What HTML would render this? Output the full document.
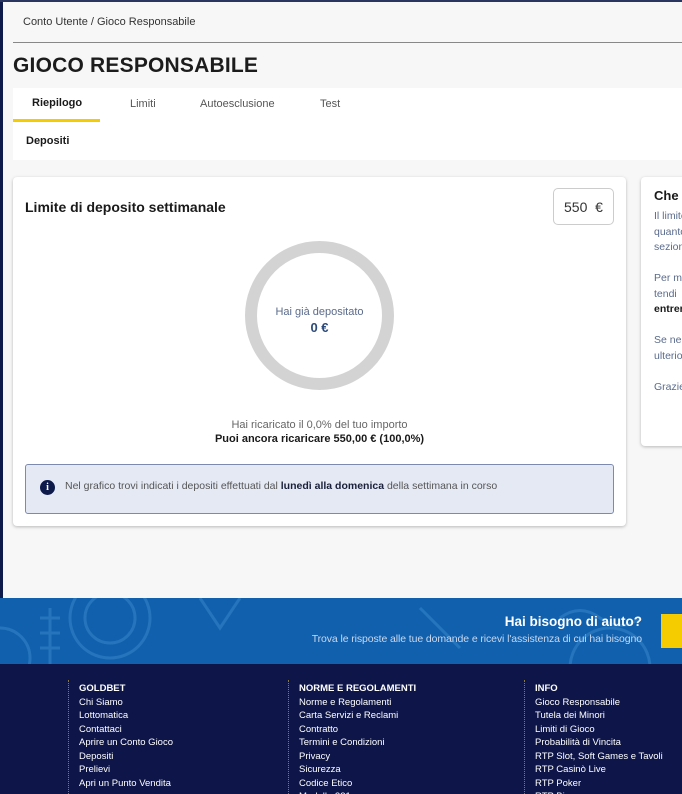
<!DOCTYPE html>
<html><head><meta charset="utf-8"><style>
*{margin:0;padding:0;box-sizing:border-box}
html,body{width:682px;height:794px;overflow:hidden}
body{background:#f7f7f7;font-family:"Liberation Sans",sans-serif;position:relative;color:#1a1a1a}
.a{position:absolute}
</style></head><body>
<div class="a" style="left:0;top:0;width:3px;height:600px;background:#0e1a4a"></div>
<div class="a" style="left:0;top:0;width:682px;height:2px;background:#2a3560"></div>
<div class="a" style="left:23px;top:16px;font-size:11px;color:#333">Conto Utente / Gioco Responsabile</div>
<div class="a" style="left:13px;top:42px;width:669px;height:1px;background:#888"></div>
<div class="a" style="left:13px;top:54px;font-size:21px;font-weight:bold;color:#1c1c1c;letter-spacing:0.2px">GIOCO RESPONSABILE</div>
<div class="a" style="left:13px;top:88px;width:669px;height:72px;background:#fff"></div>
<div class="a" style="left:32px;top:97px;font-size:11px;font-weight:bold">Riepilogo</div>
<div class="a" style="left:130px;top:98px;font-size:11px;color:#555">Limiti</div>
<div class="a" style="left:200px;top:98px;font-size:11px;color:#555">Autoesclusione</div>
<div class="a" style="left:320px;top:98px;font-size:11px;color:#555">Test</div>
<div class="a" style="left:13px;top:119px;width:87px;height:3px;background:#f5cc00"></div>
<div class="a" style="left:26px;top:135px;font-size:11px;font-weight:bold">Depositi</div>

<div class="a" style="left:13px;top:177px;width:613px;height:349px;background:#fff;border-radius:4px;box-shadow:0 1px 3px rgba(0,0,0,.25)"></div>
<div class="a" style="left:25px;top:199px;font-size:14px;font-weight:bold">Limite di deposito settimanale</div>
<div class="a" style="left:553px;top:188px;width:61px;height:37px;border:1px solid #ccc;border-radius:5px;font-size:14px;color:#333;padding:10px 0 0 10px">550&nbsp; €</div>
<div class="a" style="left:245px;top:241px;width:149px;height:149px;border:12px solid #d3d3d3;border-radius:50%"></div>
<div class="a" style="left:245px;top:306px;width:149px;text-align:center;font-size:11px;color:#5a6b8c">Hai già depositato</div>
<div class="a" style="left:245px;top:320px;width:149px;text-align:center;font-size:13px;font-weight:bold;color:#2c4a7a">0 €</div>
<div class="a" style="left:13px;top:419px;width:613px;text-align:center;font-size:11px;color:#666">Hai ricaricato il 0,0% del tuo importo</div>
<div class="a" style="left:13px;top:433px;width:613px;text-align:center;font-size:11px;font-weight:bold">Puoi ancora ricaricare 550,00 € (100,0%)</div>
<div class="a" style="left:25px;top:464px;width:589px;height:50px;background:#e4e9f4;border:1px solid #7d8ab0;border-radius:3px"></div>
<div class="a" style="left:40px;top:480px;width:15px;height:15px;border-radius:50%;background:#0e1a4a;color:#fff;font-size:10px;font-weight:bold;text-align:center;line-height:15px;font-family:'Liberation Serif',serif">i</div>
<div class="a" style="left:65px;top:480px;font-size:10.5px;color:#555">Nel grafico trovi indicati i depositi effettuati dal <b style="color:#1a1f3a">lunedì alla domenica</b> della settimana in corso</div>

<div class="a" style="left:641px;top:177px;width:50px;height:269px;background:#fff;border-radius:4px;box-shadow:0 1px 3px rgba(0,0,0,.25)"></div>
<div class="a" style="left:654px;top:188px;font-size:13px;font-weight:bold;white-space:nowrap">Che cosa</div>
<div class="a" style="left:654px;top:209px;font-size:10.5px;line-height:15.5px;color:#5a6b8c;white-space:nowrap">Il limite<br>quanto<br>sezione<br><br>Per mo<br>tendi<br><b style="color:#1a1a1a">entrerà</b><br><br>Se nece<br>ulteriori<br><br>Grazie</div>

<div class="a" style="left:0;top:598px;width:682px;height:66px;background:#1060ad"></div>
<svg class="a" style="left:0;top:598px" width="682" height="66"><g fill="none" stroke="#2b7ac0" stroke-width="3" opacity=".8"><circle cx="110" cy="20" r="40"/><circle cx="110" cy="20" r="25"/><circle cx="0" cy="60" r="30"/><path d="M200 0l20 30 20-30M420 10l40 40M560 20q20-15 40 0 20 15 40 0"/><circle cx="610" cy="70" r="40"/><path d="M50 10v56M40 20h20M40 35h20M40 50h20"/></g></svg>
<div class="a" style="left:661px;top:614px;width:21px;height:34px;background:#f5cc00"></div>
<div class="a" style="right:40px;top:614px;font-size:13.5px;font-weight:bold;color:#fff">Hai bisogno di aiuto?</div>
<div class="a" style="right:40px;top:633px;font-size:10.5px;color:#c9d8ee;letter-spacing:-0.1px">Trova le risposte alle tue domande e ricevi l'assistenza di cui hai bisogno</div>

<div class="a" style="left:0;top:664px;width:682px;height:130px;background:#0e1649"></div>
<div class="a" style="left:68px;top:680px;height:114px;border-left:1px dotted #8a7a40"></div>
<div class="a" style="left:288px;top:680px;height:114px;border-left:1px dotted #8a7a40"></div>
<div class="a" style="left:524px;top:680px;height:114px;border-left:1px dotted #8a7a40"></div>
<div class="a" style="left:79px;top:682px;font-size:9.5px;line-height:13.5px;color:#fff"><b>GOLDBET</b><br>Chi Siamo<br>Lottomatica<br>Contattaci<br>Aprire un Conto Gioco<br>Depositi<br>Prelievi<br>Apri un Punto Vendita</div>
<div class="a" style="left:299px;top:682px;font-size:9.5px;line-height:13.5px;color:#fff"><b>NORME E REGOLAMENTI</b><br>Norme e Regolamenti<br>Carta Servizi e Reclami<br>Contratto<br>Termini e Condizioni<br>Privacy<br>Sicurezza<br>Codice Etico<br>Modello 231</div>
<div class="a" style="left:535px;top:682px;font-size:9.5px;line-height:13.5px;color:#fff"><b>INFO</b><br>Gioco Responsabile<br>Tutela dei Minori<br>Limiti di Gioco<br>Probabilità di Vincita<br>RTP Slot, Soft Games e Tavoli<br>RTP Casinò Live<br>RTP Poker<br>RTP Bingo</div>
</body></html>
